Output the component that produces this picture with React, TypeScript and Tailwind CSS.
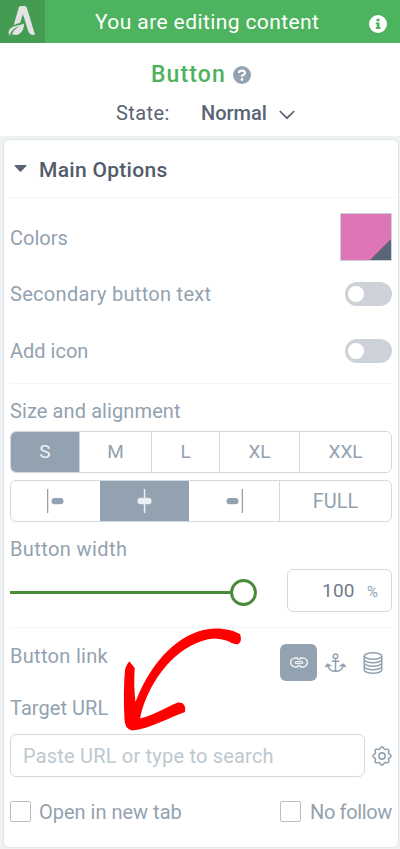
import type { ReactNode } from "react";

type LabelProps = {
  children: ReactNode;
  className?: string;
};

function Label({ children, className = "tracking-[0.1px]" }: LabelProps) {
  return (
    <span className={`block whitespace-nowrap text-[20px] leading-6 text-[#93a2b0] ${className}`}>
      {children}
    </span>
  );
}

function Toggle() {
  return (
    <button className="h-6 w-[47px] rounded-full bg-[#cdd2d9] p-1 pl-[3px]" aria-label="Toggle">
      <span className="block size-4 rounded-full bg-white" />
    </button>
  );
}

function Logo() {
  return (
    <svg className="h-[43px] w-[45px]" viewBox="0 0 45 43" fill="#e3e3e3">
      <path d="M18.800 7.500Q19.200 6 20.700 6h4.100Q26.300 6 26.800 7.500L35 34.800q-5 .8-6.600-3L22.900 14l-2.800 8.900q-3.400.3-6.400 2.300z" />
      <path d="M24 23.500c.3 4.800-2.400 11.800-8.700 11.500-2.200 0-2.800-.8-3.500-.2 1.500-4.700 5-7.200 8.500-8.600-5 .9-8.900 3.700-11 9.500-.9-2-.8-4 0-5.600 2.800-5.300 8.800-3.600 14.700-6.600z" />
    </svg>
  );
}

function AlignIcon({ side }: { side: "left" | "center" | "right" }) {
  return (
    <svg className="h-6 w-[17px]" viewBox="0 0 17 24" fill="currentColor">
      {side === "left" && (
        <>
          <rect x="0" width="1.300" height="24" />
          <rect x="4.500" y="8.900" width="12" height="6.300" rx="3" />
        </>
      )}
      {side === "center" && (
        <>
          <rect x="7.800" width="1.500" height="24" />
          <rect x="1.500" y="8.700" width="14" height="6.600" rx="3.300" />
        </>
      )}
      {side === "right" && (
        <>
          <rect x="15.700" width="1.300" height="24" />
          <rect x="0.500" y="8.900" width="12" height="6.300" rx="3" />
        </>
      )}
    </svg>
  );
}

function LinkIcon() {
  return (
    <svg className="h-[11px] w-[18px]" viewBox="0 0 18 11" fill="none" stroke="#eef1f3" strokeWidth="1.500">
      <path d="M8 3V1.700Q8 .9 7 .9H5.200a4.500 4.500 0 0 0 0 9H7q1 0 1-.9V7.800M10 3V1.700q0-.8 1-.8h1.800a4.500 4.500 0 0 1 0 9H11q-1 0-1-.9V7.800" />
      <rect x="5.200" y="4.500" width="7.600" height="1.800" rx=".9" strokeWidth="1.200" />
    </svg>
  );
}

function AnchorIcon() {
  return (
    <svg className="h-5 w-[21px]" viewBox="0 0 21 20" fill="none" stroke="#93a2b0" strokeWidth="1.500">
      <circle cx="10.500" cy="3.300" r="2.300" />
      <path d="M10.500 5.600v12.600M6.700 8.300h7.600M2.700 11.800c.3 4 3.500 6.500 7.800 6.500s7.500-2.500 7.800-6.500" />
      <path d="M.8 13.300l1.900-2.200 2.500 1.500zM20.200 13.300l-1.900-2.200-2.500 1.500z" fill="#93a2b0" />
    </svg>
  );
}

function DatabaseIcon() {
  return (
    <svg className="h-[22px] w-5" viewBox="0 0 20 22" fill="none" stroke="#93a2b0" strokeWidth="1.500">
      <ellipse cx="10" cy="4" rx="8.800" ry="3.200" />
      <path d="M1.200 4v14c0 1.700 4 3.200 8.800 3.200s8.800-1.500 8.800-3.200V4M1.200 7.500c0 1.800 4 3.200 8.800 3.200s8.800-1.400 8.800-3.200M1.200 11c0 1.800 4 3.200 8.800 3.200s8.800-1.400 8.800-3.200M1.200 14.500c0 1.800 4 3.200 8.800 3.200s8.800-1.400 8.800-3.200" />
    </svg>
  );
}

// Eight rounded teeth around the centre
const gearPoints = Array.from({ length: 96 }, (_, i) => {
  const angle = (i / 96) * Math.PI * 2;
  const radius = 8.1 + 0.95 * Math.cos(angle * 8);
  return `${(10 + radius * Math.cos(angle)).toFixed(2)},${(10 + radius * Math.sin(angle)).toFixed(2)}`;
}).join(" ");

function GearIcon() {
  return (
    <svg className="h-5 w-5" viewBox="0 0 20 20" fill="none" stroke="#93a2b0" strokeWidth="1.600">
      <polygon points={gearPoints} strokeLinejoin="round" />
      <circle cx="10" cy="10" r="3.100" />
    </svg>
  );
}

// Hand-drawn pointer from the link buttons down to the URL field
function Arrow() {
  return (
    <svg className="pointer-events-none absolute left-[120px] top-[625px] h-[110px] w-[126px]" viewBox="120 625 126 110" fill="#ff0000">
      <path d="M129.500 661.500L134.700 668Q133.500 686 135.500 702C147 672 168 642 198 631.500C214 626 230 628.500 240 634Q242.500 641 238.500 644Q233 645 228 641Q214 636 202 641C170 651 146 688 140 718.500C155 715 168 706 178 702.500Q186.500 702 185 712C170 717 150 729 132 730.500Q124.500 729 124.500 719Q123 692 125 670Q127 663 129.500 661.500Z" />
    </svg>
  );
}

const sizes = [
  { name: "S", width: "w-[68px]" },
  { name: "M", width: "w-[72px]" },
  { name: "L", width: "w-[68px]" },
  { name: "XL", width: "w-20" },
  { name: "XXL", width: "flex-1" },
];

export default function App() {
  return (
    <div className="relative h-[849px] w-[400px] overflow-hidden bg-[#eef2f3] font-[Roboto,sans-serif]">
      <header className="flex h-[43px] items-center bg-[#4db35e] text-white">
        <div className="w-[45px] bg-[#449c53]">
          <Logo />
        </div>
        <h1 className="ml-[50px] w-[250px] whitespace-nowrap text-[21px] leading-6 tracking-[0.4px]">
          You are editing content
        </h1>
        <svg className="ml-6 mt-1 h-[18px] w-[18px]" viewBox="0 0 18 18">
          <circle cx="9" cy="9" r="9" fill="#fff" />
          <path d="M7.500 3.700h3v2.500h-3zM6.800 7.500h3.700v4.700h1v1.700H6.800v-1.700h1V9.200h-1z" fill="#4db35e" />
        </svg>
      </header>

      <section className="h-[93px] bg-white pt-5">
        <div className="flex h-6 items-center pl-[151px]">
          <h2 className="w-[82px] whitespace-nowrap text-[23px] font-medium leading-6 tracking-[1.1px] text-[#4db35e]">
            Button
          </h2>
          <svg className="-mt-px h-[18px] w-[18px]" viewBox="0 0 18 18">
            <circle cx="9" cy="9" r="9" fill="#93a2b0" />
            <path d="M6 7Q6.200 4.600 9 4.600T12 7Q12 8.300 10.300 9T9 10.800" fill="none" stroke="#fff" strokeWidth="2.100" />
            <circle cx="9" cy="13.500" r="1.400" fill="#fff" />
          </svg>
        </div>
        <div className="mt-[14px] flex h-6 items-center pl-[116px] text-[20px] leading-6 text-[#5a6373]">
          <span className="w-[85px] tracking-[0.4px]">State:</span>
          <span className="w-[78px] font-medium">Normal</span>
          <svg className="mt-1 h-[10px] w-4" viewBox="0 0 16 10" fill="none" stroke="#5a6373" strokeWidth="1.700">
            <path d="M.8 1L8 8.200 15.200 1" />
          </svg>
        </div>
      </section>

      <main className="ml-[3px] mt-[3px] h-[709px] w-[396px] rounded-md border border-[#e1e6e8] bg-white px-[6px]">
        <div className="-mx-[6px] flex h-[58px] items-center border-b border-[#f5f6f7] pl-[10px]">
          <svg className="h-[7px] w-[13px]" viewBox="0 0 13 7" fill="#5a6373">
            <path d="M1.200 0h10.600q1 .3.500 1L7.200 6.500q-.7.700-1.400 0L.7 1Q.2.300 1.200 0z" />
          </svg>
          <h3 className="ml-3 mt-0.5 text-[21px] font-medium leading-6 tracking-[0.3px] text-[#525b6b]">Main Options</h3>
        </div>

        <div className="mt-[15px] flex h-12 items-center justify-between">
          <Label className="mt-0.5">Colors</Label>
          <div className="flex h-12 w-[52px] items-end justify-end border border-[#ccd2d8] bg-[#de75b4]">
            <svg className="size-[21px]" viewBox="0 0 21 21">
              <path d="M21 0v21H0z" fill="#5a6577" />
            </svg>
          </div>
        </div>
        <div className="mt-[21px] flex h-6 items-center justify-between">
          <Label className="tracking-[0.3px]">Secondary button text</Label>
          <Toggle />
        </div>
        <div className="mt-[33px] flex h-6 items-center justify-between">
          <Label className="tracking-normal">Add icon</Label>
          <Toggle />
        </div>

        <div className="mt-5 border-t border-[#f5f6f7] pt-[15px]">
          <Label>Size and alignment</Label>
        </div>
        <div className="mt-2 flex h-[42px] overflow-hidden rounded-md border border-[#d3d9de] text-[19px] text-[#93a2b0]">
          {sizes.map((size) => (
            <button
              key={size.name}
              className={`${size.width} ${size.name === "S" ? "bg-[#93a2b0] text-[#edf0f2]" : "border-l border-[#d3d9de]"}`}
            >
              {size.name}
            </button>
          ))}
        </div>
        <div className="mt-[7px] flex h-[42px] overflow-hidden rounded-md border border-[#d3d9de] text-[19px] text-[#93a2b0]">
          <button className="flex w-[89px] items-center justify-center">
            <AlignIcon side="left" />
          </button>
          <button className="flex w-[89px] items-center justify-center bg-[#93a2b0] text-[#edf0f2]">
            <AlignIcon side="center" />
          </button>
          <button className="flex w-[90px] items-center justify-center">
            <AlignIcon side="right" />
          </button>
          <button className="flex-1 border-l border-[#d3d9de] text-[20px]">FULL</button>
        </div>

        <Label className="mt-[15px] tracking-[0.4px]">Button width</Label>
        <div className="mt-2 flex h-[43px] items-center">
          <div className="mt-[3px] h-[3px] w-[220px] bg-[#488c38]" />
          <div className="mt-[3px] size-[27px] rounded-full border-3 border-[#488c38] bg-white" />
          <div className="ml-[30px] flex h-[43px] w-[105px] items-center rounded-md border border-[#d3d9de] pl-[34px] text-[19px] text-[#717b88]">
            <span className="mt-0.5 w-[45px] tracking-[0.2px]">100</span>
            <span className="mt-1 text-[15px] text-[#93a2b0]">%</span>
          </div>
        </div>

        <div className="mt-[15px] flex border-t border-[#f5f6f7] pt-4">
          <div className="w-[270px]">
            <Label className="tracking-[0.3px]">Button link</Label>
            <Label className="mt-7 tracking-[0.05px]">Target URL</Label>
          </div>
          <button className="flex size-[37px] items-center justify-center rounded-md bg-[#93a2b0]" aria-label="Link">
            <LinkIcon />
          </button>
          <button className="ml-2 flex h-[37px] items-center" aria-label="Anchor">
            <AnchorIcon />
          </button>
          <button className="ml-[17px] flex h-[37px] items-center" aria-label="Dynamic link">
            <DatabaseIcon />
          </button>
        </div>
        <div className="mt-[14px] flex h-[43px] items-center justify-between">
          <input
            className="h-[43px] w-[355px] rounded-md border border-[#d3d9de] px-3 text-[20px] tracking-[0.2px] placeholder:text-[#bdc8d0] placeholder:opacity-100"
            placeholder="Paste URL or type to search"
          />
          <GearIcon />
        </div>
        <div className="mt-6 flex h-[21px] items-center justify-between">
          <div className="flex items-center gap-2">
            <span className="size-[21px] rounded-xs border border-[#b6c0c9]" />
            <Label className="tracking-normal">Open in new tab</Label>
          </div>
          <div className="flex items-center gap-[9px]">
            <span className="size-[21px] rounded-xs border border-[#b6c0c9]" />
            <Label className="w-[82px] tracking-[-0.35px]">No follow</Label>
          </div>
        </div>
      </main>

      <Arrow />
    </div>
  );
}
